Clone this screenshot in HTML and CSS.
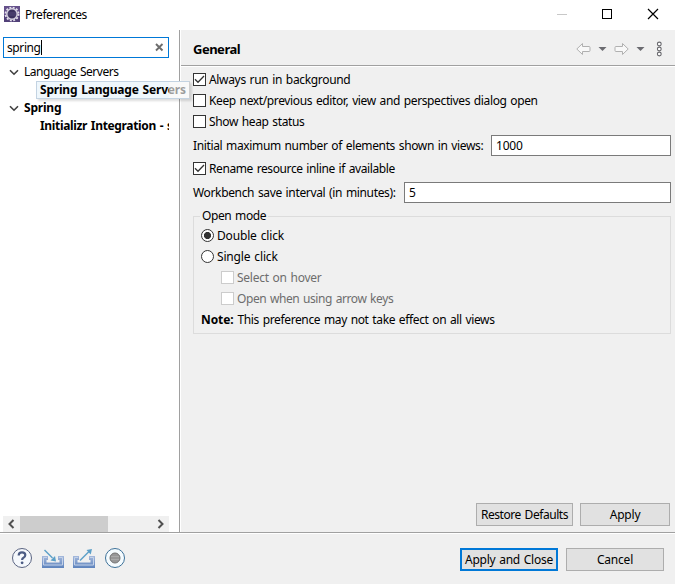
FILE: index.html
```html
<!DOCTYPE html>
<html lang="en">
<head>
<meta charset="utf-8">
<title>Preferences</title>
<link rel="stylesheet" href="styles.css">
</head>
<body>
<div class="window">
  <header class="titlebar">
    <svg class="app-icon" width="16" height="16" viewBox="0 0 16 16">
      <rect width="16" height="16" fill="#65518b"/>
      <rect y="10" width="16" height="6" fill="#514078"/>
      <circle cx="8" cy="8" r="6.500" fill="none" stroke="#e4e0ec" stroke-width="1.800" stroke-dasharray="1.900 1.500"/>
      <circle cx="8" cy="8" r="5.200" fill="#3b315e" stroke="#d5d0df" stroke-width="1.500"/>
      <path d="M4 7h8M4 9h8" stroke="#5b5180" stroke-width=".8"/>
    </svg>
    <span class="t-title">Preferences</span>
    <svg class="controls" width="103" height="12" viewBox="0 0 103 12" fill="none" shape-rendering="crispEdges">
      <path d="M0 6.500h10" stroke="#c8c8c8"/>
      <rect x="45.500" y="1.500" width="9" height="9" stroke="#000"/>
      <path d="M91 1l10 10M101 1L91 11" stroke="#000" stroke-width="1.200" shape-rendering="auto"/>
    </svg>
  </header>

  <main class="body">
    <aside class="sidebar">
      <div class="search">
        <span class="t-search">spring</span><i class="caret"></i>
        <svg class="clear" width="9" height="9" viewBox="0 0 9 9"><path d="M1 1l6.500 6.500M7.500 1L1 7.500" stroke="#6d6d6d" stroke-width="1.900"/></svg>
      </div>
      <div class="tree">
        <div class="node"><svg class="chev" width="10" height="7" viewBox="0 0 10 7"><path d="M1 1.200l4 4 4-4" fill="none" stroke="#404040" stroke-width="1.600"/></svg><span class="t-lang">Language Servers</span></div>
        <div class="node leaf selected"><div class="tip"><span class="t-sls">Spring Language Servers</span></div></div>
        <div class="node"><svg class="chev" width="10" height="7" viewBox="0 0 10 7"><path d="M1 1.200l4 4 4-4" fill="none" stroke="#404040" stroke-width="1.600"/></svg><b class="t-spring">Spring</b></div>
        <div class="node leaf"><b class="t-init">Initializr Integration - s</b></div>
      </div>
      <div class="scrollbar">
        <svg width="17" height="16" viewBox="0 0 17 16"><path d="M10.500 4L6.500 8l4 4" fill="none" stroke="#505050" stroke-width="2"/></svg>
        <div class="thumb"></div>
        <svg class="right" width="17" height="16" viewBox="0 0 17 16"><path d="M6.500 4l4 4-4 4" fill="none" stroke="#505050" stroke-width="2"/></svg>
      </div>
    </aside>

    <section class="page">
      <div class="page-head">
        <h1><span class="t-general">General</span></h1>
        <svg class="nav" width="88" height="16" viewBox="0 0 88 16">
          <g fill="#f8f8f8" stroke="#b0b0b0" stroke-linejoin="round">
            <path d="M.8 8l5.700-5.500v3H13q1 0 1 1v3q0 1-1 1H6.500v3z"/>
            <path d="M52.200 8l-5.700-5.500v3H40q-1 0-1 1v3q0 1 1 1h6.500v3z"/>
          </g>
          <path d="M22.500 6h8l-4 4zM60.500 6h8l-4 4z" fill="#6b6b70"/>
          <g fill="#fff" stroke="#66666b" stroke-width="1.100"><circle cx="83.300" cy="3" r="1.900"/><circle cx="83.300" cy="8" r="1.900"/><circle cx="83.300" cy="13" r="1.900"/></g>
        </svg>
      </div>

      <div class="form">
        <div class="row"><i class="box"><svg width="11" height="11" viewBox="0 0 11 11"><path d="M1 5.300l3 3L10 2" fill="none" stroke="#333" stroke-width="1.300"/></svg></i><span class="t-always">Always run in background</span></div>
        <div class="row"><i class="box"></i><span class="t-keep">Keep next/previous editor, view and perspectives dialog open</span></div>
        <div class="row"><i class="box"></i><span class="t-heap">Show heap status</span></div>
        <div class="field"><span class="t-max">Initial maximum number of elements shown in views:</span><div class="input max"><span class="t-1000">1000</span></div></div>
        <div class="row rename"><i class="box"><svg width="11" height="11" viewBox="0 0 11 11"><path d="M1 5.300l3 3L10 2" fill="none" stroke="#333" stroke-width="1.300"/></svg></i><span class="t-rename">Rename resource inline if available</span></div>
        <div class="field"><span class="t-work">Workbench save interval (in minutes):</span><div class="input interval"><span>5</span></div></div>
        <fieldset>
          <legend><span class="t-mode">Open mode</span></legend>
          <div class="row"><i class="radio on"></i><span class="t-double">Double click</span></div>
          <div class="row"><i class="radio"></i><span class="t-single">Single click</span></div>
          <div class="row off"><i class="box"></i><span class="t-hover">Select on hover</span></div>
          <div class="row off"><i class="box"></i><span class="t-arrow">Open when using arrow keys</span></div>
          <div class="row note"><b class="t-note">Note:</b><span class="t-pref">This preference may not take effect on all views</span></div>
        </fieldset>
      </div>

      <div class="page-buttons">
        <div class="button restore"><span class="t-restore">Restore Defaults</span></div>
        <div class="button apply"><span class="t-apply">Apply</span></div>
      </div>
    </section>
  </main>

  <footer class="footer">
    <svg class="tools" width="114" height="22" viewBox="0 0 114 22">
      <defs>
        <linearGradient id="tray" x1="0" y1="0" x2="0" y2="1"><stop offset="0" stop-color="#a5b9dc"/><stop offset="1" stop-color="#5d83bd"/></linearGradient>
      </defs>
      <circle cx="11" cy="11" r="9.500" fill="#f5f8fc" stroke="#5a6482"/>
      <path d="M7.700 8.500Q7.700 5.300 11 5.300t3.300 2.800q0 1.800-1.800 2.600-1.400.7-1.400 2.300" fill="none" stroke="#4b5b84" stroke-width="2.200"/>
      <circle cx="11.100" cy="15.800" r="1.400" fill="#4b5b84"/>
      <path d="M31 9h6v4h-1.500v2.500h13V13H47V9h6v12H31z" fill="url(#tray)"/>
      <path d="M36 10.500h-3.500v7.500h19v-7.500H48" fill="none" stroke="#c4d2e9"/>
      <path d="M33.500 3l8 8" stroke="#5b9fc8" stroke-width="1.500"/><path d="M45 14.500l-1-5.500-4.500 4.500z" fill="#5b9fc8"/>
      <path d="M62 9h6v4h-1.500v2.500h13V13H78V9h6v12H62z" fill="url(#tray)"/>
      <path d="M67 10.500h-3.500v7.500h19v-7.500H79" fill="none" stroke="#c4d2e9"/>
      <path d="M69 13.500l9-9" stroke="#5b9fc8" stroke-width="1.500"/><path d="M81 2l-1.300 5.500L75.500 3z" fill="#5b9fc8"/>
      <circle cx="104" cy="11" r="9.500" fill="#f5fbfe" stroke="#3d7199"/>
      <circle cx="104" cy="11" r="5" fill="#979797" stroke="#747474"/>
      <path d="M100 9.500h8M100 12.500h8" stroke="#aaa"/>
    </svg>
    <div class="button primary"><span class="t-close">Apply and Close</span></div>
    <div class="button cancel"><span class="t-cancel">Cancel</span></div>
  </footer>
</div>
</body>
</html>
```
FILE: styles.css
```css
* { box-sizing: border-box; }
body { margin: 0; font: 12px/18px "Noto Sans", "Open Sans", sans-serif; color: #000; word-spacing: 1px; }
span, b { white-space: nowrap; }
svg { display: block; flex: none; }
.window { width: 675px; height: 584px; display: flex; flex-direction: column; background: #f0f0f0; overflow: hidden; }

/* Text tracking */
.t-title { letter-spacing: -.45px; padding-top: 2px; }
.t-search { letter-spacing: -.4px; }
.t-lang { letter-spacing: -.48px; }
.t-sls { letter-spacing: -.2px; }
.t-spring { letter-spacing: -.2px; }
.t-init { letter-spacing: -.34px; }
.t-general { letter-spacing: -.5px; }
.t-always { letter-spacing: -.33px; }
.t-keep { letter-spacing: -.37px; }
.t-heap { letter-spacing: -.37px; }
.t-max { letter-spacing: -.36px; }
.t-1000 { letter-spacing: -.2px; }
.t-rename { letter-spacing: -.4px; }
.t-work { letter-spacing: -.35px; }
.t-mode { letter-spacing: -.4px; }
.t-double, .t-single { letter-spacing: -.16px; }
.t-hover { letter-spacing: -.27px; }
.t-arrow { letter-spacing: -.42px; }
.t-note { letter-spacing: -.1px; margin-right: 1px; }
.t-pref { letter-spacing: -.37px; }
.t-restore { letter-spacing: -.44px; }
.t-apply { letter-spacing: -.2px; }
.t-close { letter-spacing: -.27px; }
.t-cancel { letter-spacing: -.2px; }

.titlebar { height: 30px; flex: none; display: flex; align-items: center; background: #fff; padding: 0 16px 2px 4px; }
.app-icon { margin-right: 5px; }
.controls { margin-left: auto; margin-right: -1px; }

.body { height: 502px; flex: none; display: flex; }
.sidebar { width: 180px; flex: none; display: flex; flex-direction: column; background: #fff; border-right: 1px solid #a0a0a0; padding: 7px 10px 0 3px; }
.search { height: 21px; border: 1px solid #0078d7; display: flex; align-items: center; padding: 0 4px 0 3px; }
.caret { width: 1px; height: 15px; background: #000; }
.clear { margin-left: auto; }
.tree { margin-top: 5px; flex: 1; }
.node { height: 18px; display: flex; align-items: center; padding-left: 6px; overflow: hidden; }
.chev { margin-right: 5px; }
.leaf { padding-left: 37px; }
.selected { position: relative; overflow: visible; }
.tip { position: absolute; z-index: 2; left: 33px; top: 0; width: 154px; height: 18px; padding-left: 3px; line-height: 16px; font-weight: bold; color: #000; border: 1px solid #c3d3e2; border-right-color: #d0d0d0; background: linear-gradient(90deg, #eff7fc 132px, #f8f8f8 132px); box-shadow: 2px 2px 2px #0002; }
.tip::after { content: ""; position: absolute; left: 132px; right: 0; top: 0; bottom: 0; background: #f8f8f8a0; }
.scrollbar { height: 16px; width: 166px; display: flex; background: #f0f0f0; }
.thumb { width: 88px; background: #cdcdcd; }
.right { margin-left: auto; }

.page { flex: 1; min-width: 0; display: flex; flex-direction: column; border-left: 1px solid #fff; }
.page-head { height: 37px; flex: none; display: flex; align-items: center; justify-content: space-between; padding: 1px 11px 0 12px; border-bottom: 1px solid #fff; box-shadow: inset 0 -1px #a0a0a0; }
h1 { margin: 0; font-size: 13px; line-height: 18px; }
.form { flex: 1; padding: 2px 4px 0 12px; }
.row { height: 21px; display: flex; align-items: center; gap: 3px; }
.box { width: 13px; height: 13px; flex: none; border: 1px solid #333; background: #fff; }
.field { height: 21px; display: flex; align-items: center; justify-content: space-between; margin-top: 3px; }
.rename { margin: 2px 0; }
.rename + .field { margin-top: 3px; }
.input { height: 21px; flex: none; border: 1px solid #7a7a7a; background: #fff; padding-left: 4px; line-height: 19px; }
.max { width: 180px; }
.interval { width: 267px; }
fieldset { margin: 4px 0 0; height: 127px; min-width: 0; border: 1px solid #dcdcdc; padding: 0 7px; }
legend { height: 18px; padding: 0 2px; margin-left: -1px; line-height: 18px; }
.radio { width: 13px; height: 13px; flex: none; border: 1px solid #333; border-radius: 50%; background: #fff; }
.on { background: radial-gradient(circle, #333 3.2px, #fff 3.9px); }
.off { padding-left: 20px; color: #6d6d6d; }
.off .box { border-color: #ccc; }
.page-buttons { display: flex; justify-content: flex-end; gap: 7px; padding: 0 5px 6px 0; }
.button { height: 23px; display: flex; align-items: center; justify-content: center; border: 1px solid #adadad; background: #e1e1e1; }
.restore { width: 97px; }
.apply { width: 90px; }

.footer { height: 52px; flex: none; display: flex; align-items: center; border-top: 1px solid #a0a0a0; box-shadow: inset 0 1px #fff; padding: 2px 11px 0; }
.tools { margin-bottom: 4px; }
.primary { width: 98px; margin-left: auto; margin-right: 8px; border: 2px solid #0078d7; }
.cancel { width: 98px; }
```
